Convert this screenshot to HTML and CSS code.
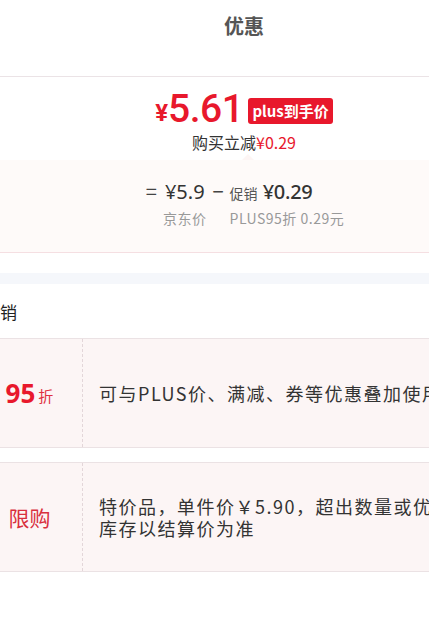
FILE: index.html
```html
<!DOCTYPE html>
<html lang="zh-CN">
<head>
  <meta charset="UTF-8">
  <meta name="viewport" content="width=device-width, initial-scale=1.0">
  <title>优惠</title>
  <link rel="stylesheet" href="styles.css">
</head>
<body>
  <div class="page">
    <!-- Header -->
    <div class="header">优惠</div>

    <!-- Price summary -->
    <div class="summary">
      <div class="final-price">
        <span class="yen">¥</span><span class="amount">5.61</span>
        <span class="badge">plus到手价</span>
      </div>
      <div class="saving">购买立减<span class="red">¥0.29</span></div>
    </div>

    <div class="calc-box">
      <div class="calc-grid">
        <span class="op">=</span>
        <span class="num first">¥5.9</span>
        <span class="op minus">−</span>
        <span class="num"><span class="tag">促销</span> <b>¥0.29</b></span>
        <span></span>
        <span class="label">京东价</span>
        <span></span>
        <span class="label">PLUS95折 0.29元</span>
      </div>
    </div>

    <div class="band"></div>

    <!-- Promotion list -->
    <div class="section">
      <h3 class="section-title">促销</h3>
      <div class="promo">
        <div class="promo-left"><span class="big">95</span><span class="small">折</span></div>
        <div class="promo-text">可与PLUS价、满减、券等优惠叠加使用</div>
      </div>
      <div class="promo">
        <div class="promo-left"><span class="limit">限购</span></div>
        <div class="promo-text">特价品，单件价￥5.90，超出数量或优惠活动结束后<br>库存以结算价为准</div>
      </div>
    </div>
  </div>
</body>
</html>
```

FILE: styles.css
```css
/* General */
body {
  margin: 0;
  padding: 0;
  background-color: #fff;
  font-family: "Noto Sans CJK SC", "Noto Sans", sans-serif;
  color: #333;
  overflow: hidden;
}

.page {
  width: 534px;
  margin-left: -23px;
}

/* Header */
.header {
  height: 76px;
  line-height: 52px;
  text-align: center;
  font-size: 20px;
  font-weight: bold;
  color: #555;
  border-bottom: 1px solid #ebe3e6;
}

/* Summary */
.summary {
  padding-top: 10px;
  text-align: center;
}

.final-price {
  display: flex;
  justify-content: center;
  align-items: center;
  height: 44px;
  color: #e8182c;
}

.final-price .yen {
  font-family: "Roboto", sans-serif;
  font-size: 24px;
  font-weight: bold;
  margin-top: 8px;
}

.final-price .amount {
  font-family: "Roboto", sans-serif;
  font-size: 39px;
  font-weight: 500;
  letter-spacing: -0.5px;
}

.badge {
  margin-left: 5px;
  margin-top: 4px;
  padding: 0 4px;
  height: 26px;
  line-height: 26px;
  background-color: #e8182c;
  color: #fff;
  font-size: 15px;
  font-weight: bold;
  border-radius: 3px;
}

.saving {
  font-size: 16px;
  line-height: 22px;
  color: #333;
}

.red {
  color: #e8182c;
}

/* Calculation box */
.calc-box {
  position: relative;
  margin-top: 7px;
  height: 92px;
  background-color: #fefaf9;
  border-bottom: 1px solid #f5dfe2;
  display: flex;
  justify-content: center;
}

.calc-box::before {
  content: "";
  position: absolute;
  left: 265px;
  top: -12px;
  border: 6px solid transparent;
  border-bottom-color: #fdf5f4;
}

.calc-grid {
  display: grid;
  grid-template-columns: auto auto auto auto;
  align-content: start;
  align-items: baseline;
  padding-top: 18px;
  margin-left: 2px;
}

.op {
  font-size: 20px;
  line-height: 26px;
  color: #444;
  padding-right: 6px;
}

.minus {
  padding: 0 6px 0 6px;
}

.num {
  font-family: "Noto Sans", "Noto Sans CJK SC", sans-serif;
  font-size: 20px;
  line-height: 26px;
  color: #333;
}

.num.first {
  padding-left: 2px;
}

.num b {
  font-weight: 500;
  letter-spacing: -0.3px;
}

.tag {
  font-family: "Noto Sans CJK SC", sans-serif;
  font-size: 14px;
  color: #555;
}

.label {
  font-size: 14px;
  line-height: 20px;
  letter-spacing: 0.5px;
  color: #999;
  margin-top: 2px;
  white-space: nowrap;
}

/* Band */
.band {
  height: 11px;
  margin-top: 20px;
  background-color: #f5f7fb;
}

/* Section */
.section-title {
  margin: 0;
  height: 54px;
  line-height: 56px;
  padding-left: 6px;
  font-size: 17px;
  font-weight: normal;
  color: #222;
}

.promo {
  display: flex;
  height: 108px;
  background-color: #fcf5f5;
  border-top: 1px solid #ebe2e4;
  border-bottom: 1px solid #ebe2e4;
  margin-bottom: 14px;
}

.promo-left {
  width: 105px;
  flex: none;
  display: flex;
  justify-content: center;
  align-items: center;
  border-right: 1px dashed #e3d6d9;
  color: #e8182c;
}

.promo-left .big {
  font-family: "Noto Sans", sans-serif;
  font-size: 26px;
  font-weight: bold;
}

.promo-left .small {
  font-size: 15px;
  margin-left: 3px;
  margin-top: 4px;
  color: #e03040;
}

.promo-left .limit {
  font-size: 21px;
  color: #d9303e;
}

.promo-text {
  display: flex;
  align-items: center;
  padding-left: 16px;
  font-size: 18px;
  line-height: 22px;
  letter-spacing: 1.5px;
  color: #333;
  white-space: nowrap;
}
```
